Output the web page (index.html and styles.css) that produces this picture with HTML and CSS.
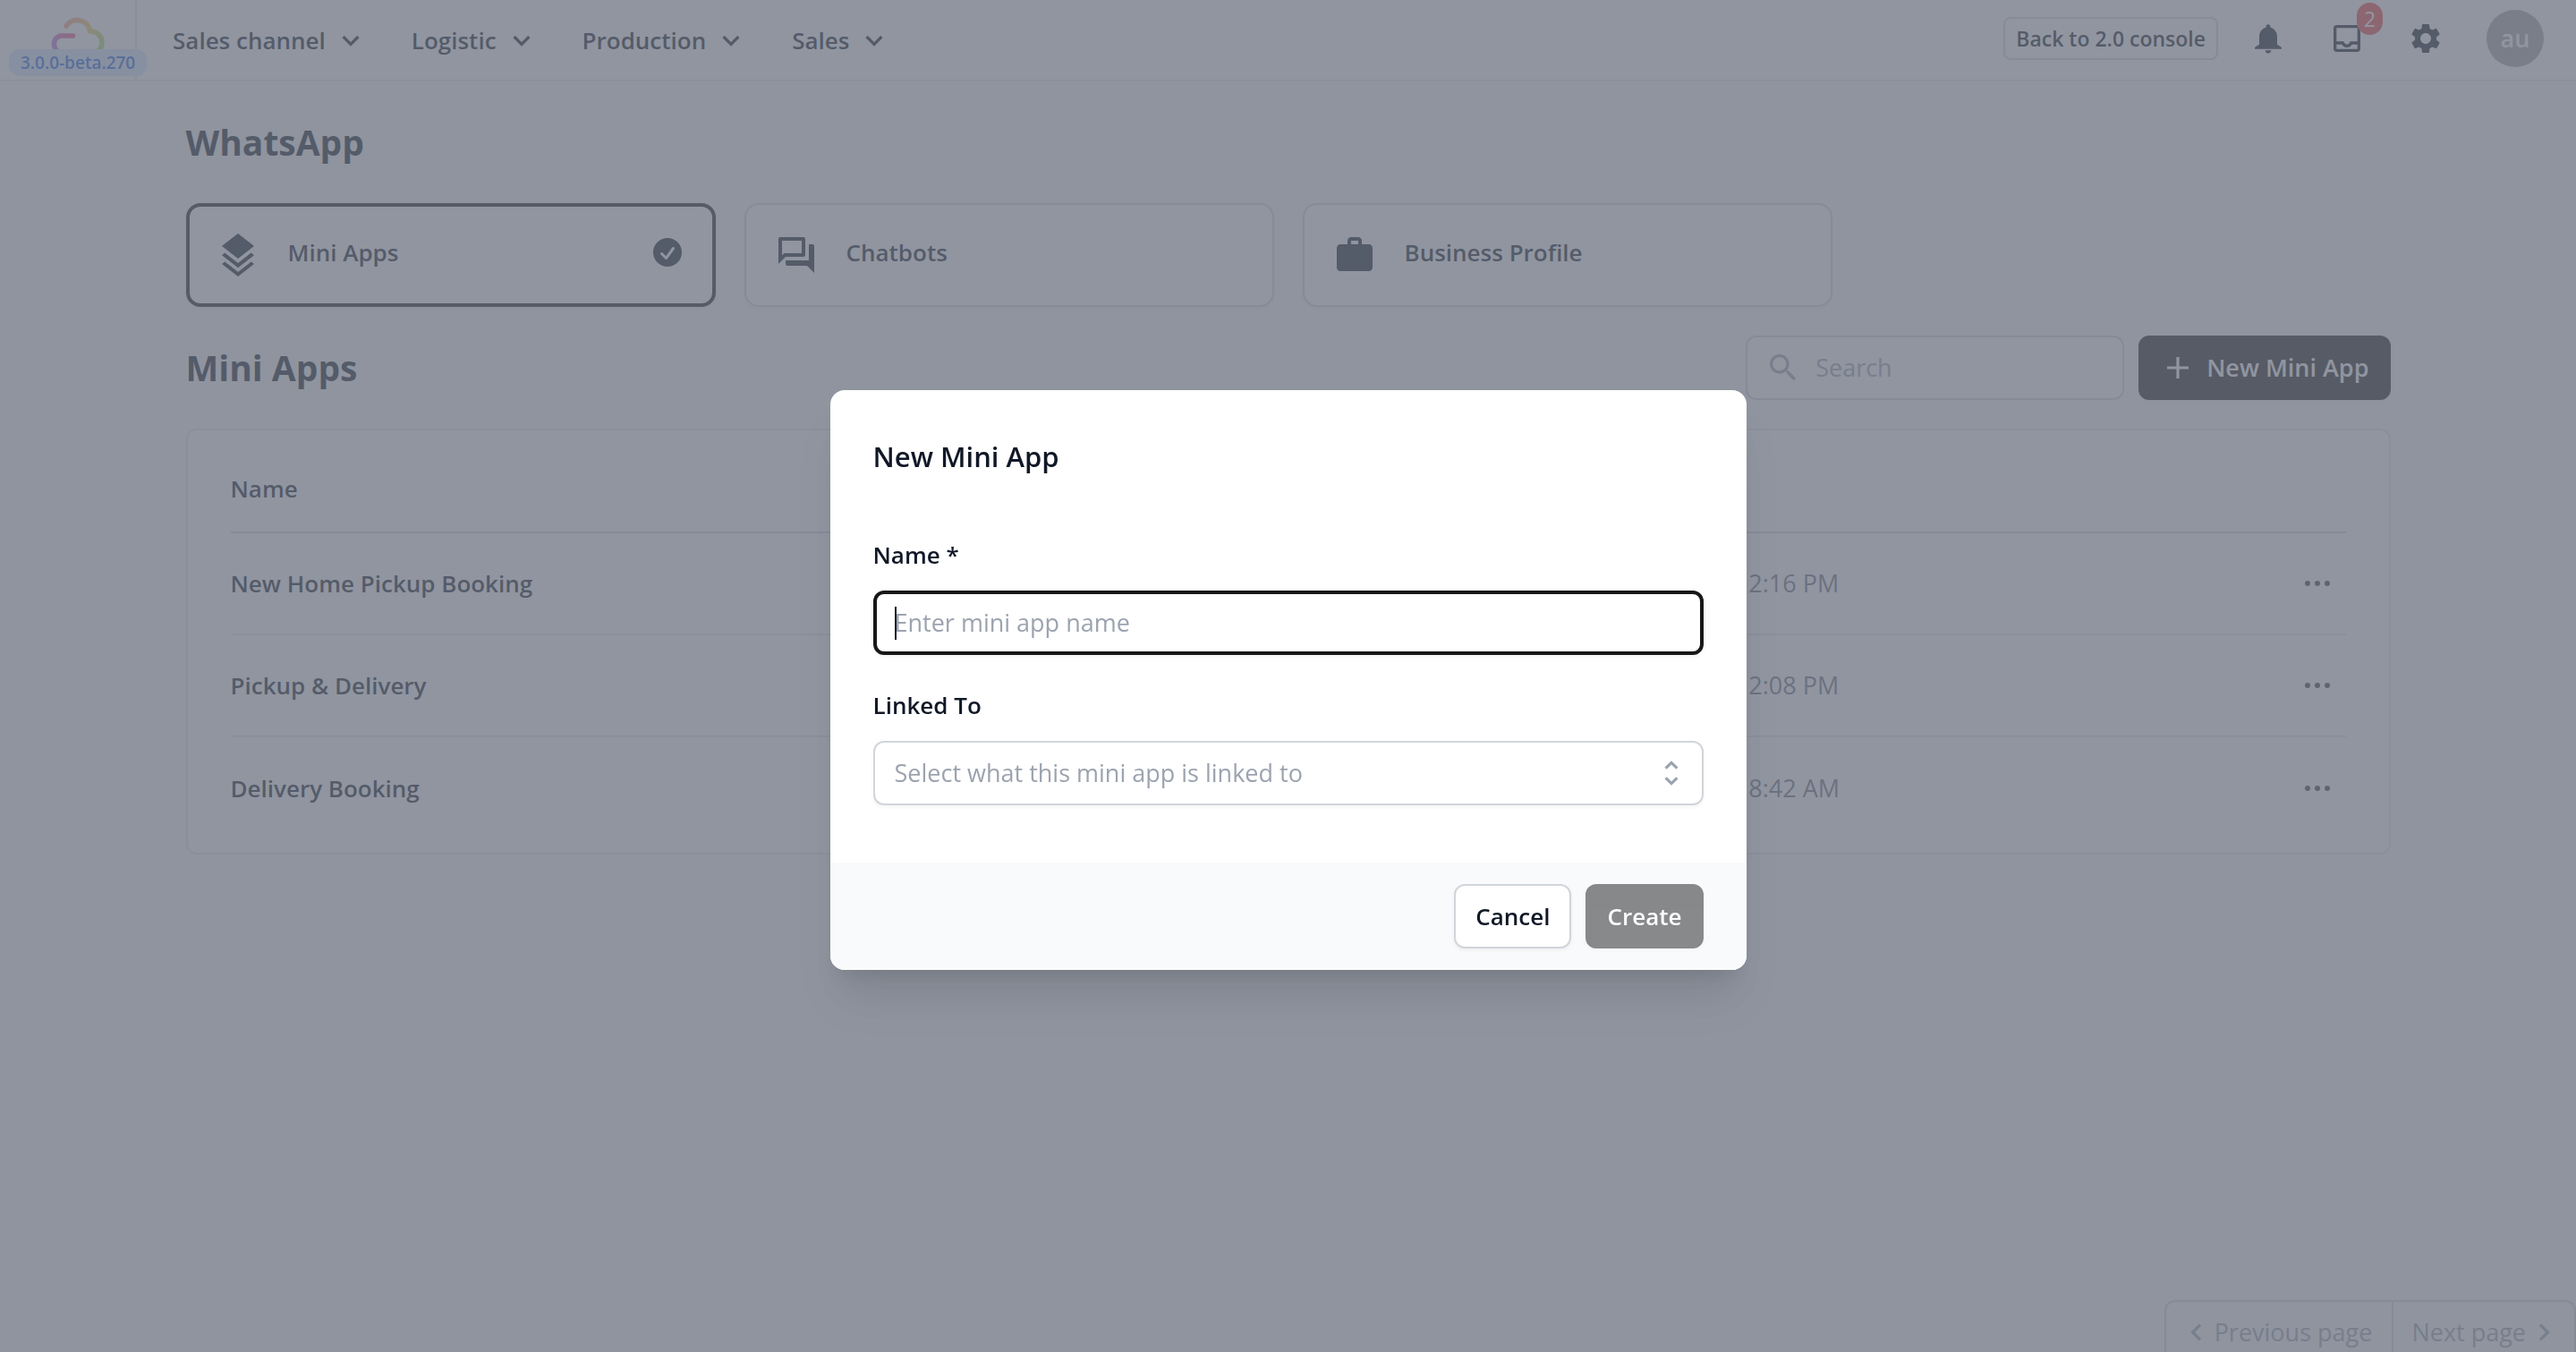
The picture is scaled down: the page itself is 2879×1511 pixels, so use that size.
FILE: index.html
```html
<!doctype html>
<html lang="en">
<head>
    <meta charset="UTF-8">
    <meta name="viewport" content="width=device-width, initial-scale=1.0">
    <title>WhatsApp - Mini Apps</title>

    <link rel="stylesheet" href="styles.css">
</head>
<body>
    <header class="topbar">
        <a class="brand" href="#" aria-label="Home">
            <svg class="brand-logo" viewBox="0 0 62 44" stroke-width="5.500" stroke-linecap="round" stroke-linejoin="round">
                <defs>
                    <linearGradient id="cloudTop" x1="18" y1="0" x2="58" y2="38" gradientUnits="userSpaceOnUse">
                        <stop offset="0" stop-color="#ffa08a"/>
                        <stop offset="0.5" stop-color="#f0cc60"/>
                        <stop offset="1" stop-color="#98e070"/>
                    </linearGradient>
                    <linearGradient id="cloudLeft" x1="28" y1="20" x2="2" y2="38" gradientUnits="userSpaceOnUse">
                        <stop offset="0" stop-color="#ff5080"/>
                        <stop offset="1" stop-color="#b080f0"/>
                    </linearGradient>
                </defs>
                <path d="M18 10C21 5.500 25 3.500 30 3.500c8 0 14 5.500 14.500 12.500 8-.5 13.500 5.500 13.500 12.500 0 6-4 11-11 11.500" stroke="url(#cloudTop)"/>
                <path d="M25.500 21H13C8 21 4.500 25 4.500 30c0 6 4 10 9.500 10" stroke="url(#cloudLeft)"/>
            </svg>
            <span class="version">3.0.0-beta.270</span>
        </a>

        <nav class="menu">
            <button type="button" class="menu-item">Sales channel
                <svg class="icon" viewBox="0 0 20 20"><path d="M5.800 8l4.200 4.200L14.200 8"/></svg>
            </button>
            <button type="button" class="menu-item">Logistic
                <svg class="icon" viewBox="0 0 20 20"><path d="M5.800 8l4.200 4.200L14.200 8"/></svg>
            </button>
            <button type="button" class="menu-item">Production
                <svg class="icon" viewBox="0 0 20 20"><path d="M5.800 8l4.200 4.200L14.200 8"/></svg>
            </button>
            <button type="button" class="menu-item">Sales
                <svg class="icon" viewBox="0 0 20 20"><path d="M5.800 8l4.200 4.200L14.200 8"/></svg>
            </button>
        </nav>

        <div class="tools">
            <a class="console-link" href="#">Back to 2.0 console</a>
            <button type="button" class="tool" aria-label="Notifications">
                <svg viewBox="0 0 24 24"><path d="M12 22c1.100 0 2-.9 2-2h-4c0 1.100.9 2 2 2zm6-6v-5c0-3.070-1.630-5.640-4.500-6.320V4c0-.83-.67-1.500-1.500-1.500s-1.500.67-1.500 1.500v.68C7.640 5.360 6 7.920 6 11v5l-3 2v1h18v-1l-3-2z"/></svg>
            </button>
            <button type="button" class="tool" aria-label="Inbox">
                <svg viewBox="0 0 24 24"><path d="M19 3H5c-1.100 0-2 .9-2 2v14c0 1.100.9 2 2 2h14c1.100 0 2-.9 2-2V5c0-1.100-.9-2-2-2zm0 16H5v-3h3.560c.69 1.190 1.970 2 3.450 2s2.750-.81 3.450-2H19v3zm0-5h-4.990c0 1.100-.9 2-2 2s-2-.9-2-2H5V5h14v9z"/></svg>
                <span class="badge">2</span>
            </button>
            <button type="button" class="tool" aria-label="Settings">
                <svg viewBox="0 0 24 24"><path d="M19.140 12.940c.04-.3.060-.61.060-.94 0-.32-.02-.64-.07-.94l2.030-1.580c.18-.14.230-.41.120-.61l-1.920-3.320c-.12-.22-.37-.29-.59-.22l-2.390.96c-.5-.38-1.030-.7-1.620-.94l-.36-2.540c-.04-.24-.24-.41-.48-.41h-3.840c-.24 0-.43.170-.47.410l-.36 2.540c-.59.240-1.130.570-1.620.940l-2.390-.96c-.22-.08-.47 0-.59.220L2.740 8.870c-.12.210-.08.470.120.610l2.030 1.580c-.05.300-.09.630-.09.940s.02.640.070.940l-2.030 1.580c-.18.140-.23.410-.12.610l1.920 3.320c.12.220.37.290.59.220l2.390-.96c.5.380 1.030.7 1.620.940l.36 2.540c.05.240.24.410.48.410h3.840c.24 0 .44-.17.470-.41l.36-2.540c.59-.24 1.130-.56 1.620-.94l2.390.96c.22.080.47 0 .59-.22l1.920-3.320c.12-.22.070-.47-.12-.61l-2.010-1.580zM12 15.600c-1.980 0-3.600-1.620-3.600-3.600s1.620-3.600 3.600-3.600 3.600 1.620 3.600 3.600-1.620 3.600-3.600 3.600z"/></svg>
            </button>
            <button type="button" class="avatar">au</button>
        </div>
    </header>

    <main class="content">
        <h1>WhatsApp</h1>

        <div class="tabs">
            <button type="button" class="tab tab-active">
                <svg class="tab-icon" viewBox="0 0 24 24"><path d="M12 0l9 7-9 7-9-7z"/><path d="M4.630 10.810L12 16.540l7.370-5.730L21 12.080l-9 7-9-7z"/><path d="M4.630 15.730L12 21.460l7.370-5.730L21 17l-9 7-9-7z"/></svg>
                <span>Mini Apps</span>
                <svg class="tab-check" viewBox="0 0 20 20"><path fill-rule="evenodd" d="M10 18a8 8 0 100-16 8 8 0 000 16zm3.860-9.810a.75.75 0 00-1.220-.88l-3.480 4.800-1.880-1.880a.75.75 0 10-1.060 1.060l2.500 2.500a.75.75 0 001.140-.09l4-5.510z"/></svg>
            </button>
            <button type="button" class="tab">
                <svg class="tab-icon" viewBox="0 0 24 24"><path d="M15 4v7H5.170L4 12.170V4h11m1-2H3c-.55 0-1 .45-1 1v14l4-4h10c.55 0 1-.45 1-1V3c0-.55-.45-1-1-1zm5 4h-2v9H6v2c0 .55.450 1 1 1h11l4 4V7c0-.55-.45-1-1-1z"/></svg>
                <span>Chatbots</span>
            </button>
            <button type="button" class="tab">
                <svg class="tab-icon" viewBox="0 0 24 24"><path d="M20 6h-4V4c0-1.100-.9-2-2-2h-4c-1.100 0-2 .9-2 2v2H4c-1.100 0-2 .9-2 2v11c0 1.100.9 2 2 2h16c1.100 0 2-.9 2-2V8c0-1.100-.9-2-2-2zm-6 0h-4V4h4v2z"/></svg>
                <span>Business Profile</span>
            </button>
        </div>

        <div class="section-head">
            <h2>Mini Apps</h2>
            <div class="search">
                <svg viewBox="0 0 24 24"><path d="M15.500 14h-.79l-.28-.27C15.410 12.590 16 11.110 16 9.500 16 5.910 13.090 3 9.500 3S3 5.910 3 9.500 5.910 16 9.500 16c1.610 0 3.090-.59 4.230-1.570l.27.280v.79l5 4.990L20.490 19l-4.990-5zm-6 0C7.010 14 5 11.990 5 9.500S7.010 5 9.500 5 14 7.010 14 9.500 11.990 14 9.500 14z"/></svg>
                <input type="search" placeholder="Search" aria-label="Search">
            </div>
            <button type="button" class="btn btn-primary btn-new">
                <svg class="icon" viewBox="0 0 20 20"><path d="M10 4v12M4 10h12"/></svg>
                New Mini App
            </button>
        </div>

        <div class="table-card">
            <table>
                <thead>
                    <tr>
                        <th class="col-name">Name</th>
                        <th></th>
                        <th></th>
                    </tr>
                </thead>
                <tbody>
                    <tr>
                        <td class="col-name">New Home Pickup Booking</td>
                        <td class="col-date">2:16 PM</td>
                        <td class="col-actions"><button type="button" aria-label="More"><svg viewBox="0 0 20 20"><path d="M3 10a1.500 1.500 0 113 0 1.500 1.500 0 01-3 0zM8.500 10a1.500 1.500 0 113 0 1.500 1.500 0 01-3 0zM14 10a1.500 1.500 0 113 0 1.500 1.500 0 01-3 0z"/></svg></button></td>
                    </tr>
                    <tr>
                        <td class="col-name">Pickup &amp; Delivery</td>
                        <td class="col-date">2:08 PM</td>
                        <td class="col-actions"><button type="button" aria-label="More"><svg viewBox="0 0 20 20"><path d="M3 10a1.500 1.500 0 113 0 1.500 1.500 0 01-3 0zM8.500 10a1.500 1.500 0 113 0 1.500 1.500 0 01-3 0zM14 10a1.500 1.500 0 113 0 1.500 1.500 0 01-3 0z"/></svg></button></td>
                    </tr>
                    <tr>
                        <td class="col-name">Delivery Booking</td>
                        <td class="col-date">8:42 AM</td>
                        <td class="col-actions"><button type="button" aria-label="More"><svg viewBox="0 0 20 20"><path d="M3 10a1.500 1.500 0 113 0 1.500 1.500 0 01-3 0zM8.500 10a1.500 1.500 0 113 0 1.500 1.500 0 01-3 0zM14 10a1.500 1.500 0 113 0 1.500 1.500 0 01-3 0z"/></svg></button></td>
                    </tr>
                </tbody>
            </table>
        </div>
    </main>

    <nav class="pagination">
        <button type="button" disabled>
            <svg class="icon" viewBox="0 0 20 20"><path d="M12 5.800L7.800 10l4.200 4.200"/></svg>
            Previous page
        </button>
        <button type="button" disabled>
            Next page
            <svg class="icon" viewBox="0 0 20 20"><path d="M8 5.800l4.200 4.200L8 14.200"/></svg>
        </button>
    </nav>

    <div class="overlay">
        <form class="modal" role="dialog" aria-labelledby="modalTitle">
            <div class="modal-body">
                <h3 id="modalTitle">New Mini App</h3>

                <label for="name">Name *</label>
                <input type="text" id="name" placeholder="Enter mini app name" autofocus>

                <label for="linked">Linked To</label>
                <div class="select">
                    <select id="linked">
                        <option value="">Select what this mini app is linked to</option>
                    </select>
                    <svg class="icon" viewBox="0 0 20 20"><path d="M6.800 7.300L10 4.200l3.200 3.100M6.800 12.700l3.200 3.100 3.200-3.100"/></svg>
                </div>
            </div>
            <div class="modal-footer">
                <button type="button" class="btn">Cancel</button>
                <button type="submit" class="btn btn-primary" disabled>Create</button>
            </div>
        </form>
    </div>
</body>
</html>
```
FILE: styles.css
```css
* {
    box-sizing: border-box;
}

body {
    margin: 0;
    overflow: hidden;
    height: 100vh;
    background-color: #fafafa;
    color: #111827;
    font-family: 'Segoe UI', 'Open Sans', sans-serif;
    font-size: 27px;
    line-height: 40px;
}

button, input, select {
    font: inherit;
    color: inherit;
}

button {
    border: 0;
    padding: 0;
    background: none;
    cursor: pointer;
}

a {
    color: inherit;
    text-decoration: none;
}

h1, h2, h3 {
    margin: 0;
}

svg {
    flex: none;
    fill: currentColor;
}

.icon {
    width: 40px;
    height: 40px;
    fill: none;
    stroke: currentColor;
    stroke-width: 1.6;
}

/* top bar */
.topbar {
    display: flex;
    align-items: center;
    height: 91px;
    background-color: #fff;
    border-bottom: 2px solid #e5e7eb;
}

.brand {
    position: relative;
    width: 153px;
    height: 89px;
    padding: 19px 0 0 56px;
    border-right: 2px solid #e5e7eb;
}

.brand-logo {
    display: block;
    width: 62px;
    height: 44px;
    fill: none;
}

.version {
    position: absolute;
    top: 55px;
    left: 10px;
    padding: 0 13px;
    border-radius: 12px;
    background-color: #dbeafe;
    color: #2563eb;
    font-size: 19px;
    font-weight: 600;
    line-height: 30px;
    white-space: nowrap;
}

.menu {
    display: flex;
    gap: 48px;
    margin-left: 40px;
}

.menu-item {
    display: flex;
    align-items: center;
    gap: 8px;
    font-size: 26px;
    font-weight: 600;
}

.tools {
    display: flex;
    align-items: center;
    margin-left: auto;
    padding: 0 36px 4px 0;
}

.console-link {
    margin-right: 36px;
    padding: 0 12px;
    border: 2px solid #d1d5db;
    border-radius: 8px;
    font-size: 23px;
    font-weight: 600;
    line-height: 44px;
}

.tool {
    position: relative;
    width: 40px;
    height: 40px;
    margin-right: 48px;
}

.tool svg {
    display: block;
    width: 40px;
    height: 40px;
}

.badge {
    position: absolute;
    top: -20px;
    right: -20px;
    width: 29px;
    border-radius: 16px;
    background-color: #ef4444;
    color: #fff;
    font-size: 23px;
    line-height: 36px;
}

.avatar {
    width: 64px;
    height: 64px;
    border-radius: 50%;
    background-color: #a3a3a3;
    color: #fff;
    font-weight: 600;
}

/* page */
.content {
    max-width: 2560px;
    min-height: calc(100vh - 149px);
    margin: 0 auto;
    padding: 44px 48px;
}

h1, h2 {
    font-size: 39px;
    font-weight: 700;
    line-height: 48px;
}

.tabs {
    display: grid;
    grid-template-columns: repeat(4, 1fr);
    gap: 32px;
    margin-top: 44px;
}

.tab {
    display: flex;
    align-items: center;
    gap: 32px;
    height: 116px;
    padding: 0 32px;
    border: 2px solid #d1d5db;
    border-radius: 16px;
    background-color: #fff;
    box-shadow: 0 2px 4px rgba(0, 0, 0, 0.05);
    font-size: 26px;
    font-weight: 600;
}

.tab-active {
    padding: 0 30px;
    border: 4px solid #18181b;
}

.tab-icon {
    width: 48px;
    height: 48px;
}

.tab span,
.tab-check {
    margin-bottom: 6px;
}

.tab-check {
    width: 40px;
    height: 40px;
    margin-left: auto;
}

.section-head {
    display: flex;
    align-items: center;
    gap: 16px;
    margin-top: 32px;
}

.section-head h2 {
    margin-right: auto;
}

.search {
    display: flex;
    align-items: center;
    gap: 16px;
    width: 423px;
    height: 72px;
    padding: 0 20px;
    border: 2px solid #d1d5db;
    border-radius: 12px;
    background-color: #fff;
    color: #9ca3af;
}

.search svg {
    width: 40px;
    height: 40px;
}

.search input {
    flex: 1;
    min-width: 0;
    padding: 0;
    border: 0;
    outline: 0;
    background: none;
}

::placeholder {
    color: #9ca3af;
    opacity: 1;
}

.btn {
    height: 72px;
    padding: 0 22px;
    border: 2px solid #d1d5db;
    border-radius: 12px;
    background-color: #fff;
    box-shadow: 0 2px 4px rgba(0, 0, 0, 0.05);
    font-size: 26px;
    font-weight: 600;
}

.btn-primary {
    border-color: #18181b;
    background-color: #18181b;
    color: #fff;
}

.btn-primary:disabled {
    opacity: 0.5;
}

.btn-new {
    display: flex;
    align-items: center;
    gap: 12px;
    font-size: 27px;
}

.table-card {
    margin-top: 32px;
    padding: 16px 48px;
    border: 2px solid #e5e7eb;
    border-radius: 12px;
    background-color: #fff;
}

table {
    width: 100%;
    border-collapse: collapse;
}

th, td {
    height: 114px;
    padding: 0;
    border-bottom: 2px solid #e5e7eb;
    text-align: left;
}

th {
    height: 98px;
    border-color: #d1d5db;
}

tr:last-child td {
    border-bottom: 0;
}

.col-name {
    width: 70%;
    font-size: 26px;
    font-weight: 600;
}

.col-date {
    padding-left: 42px;
    color: #6b7280;
}

.col-actions {
    padding-right: 12px;
    color: #3f3f46;
}

.col-actions button {
    display: block;
    margin-left: auto;
}

.col-actions svg {
    display: block;
    width: 40px;
    height: 40px;
}

.pagination {
    display: flex;
    justify-content: flex-end;
    color: #9ca3af;
}

.pagination button {
    display: flex;
    align-items: center;
    height: 72px;
    padding: 0 22px 0 14px;
    border: 2px solid #d1d5db;
    border-radius: 12px 0 0 12px;
    background-color: #fafafa;
}

.pagination button + button {
    padding: 0 14px 0 20px;
    border-left: 0;
    border-radius: 0 12px 12px 0;
}

/* modal */
.overlay {
    position: fixed;
    inset: 0;
    display: flex;
    align-items: center;
    justify-content: center;
    padding-top: 8px;
    background-color: rgba(107, 114, 128, 0.75);
}

.modal {
    width: 1024px;
    max-width: 100%;
    overflow: hidden;
    border-radius: 16px;
    background-color: #fff;
    box-shadow: 0 40px 50px -10px rgba(0, 0, 0, 0.1), 0 16px 20px -12px rgba(0, 0, 0, 0.1);
}

.modal-body {
    display: flex;
    flex-direction: column;
    padding: 48px 48px 64px;
}

.modal h3 {
    margin-bottom: 28px;
    font-size: 31px;
    font-weight: 600;
    line-height: 52px;
}

.modal label {
    margin-top: 36px;
    margin-bottom: 20px;
    font-size: 26px;
    font-weight: 600;
}

.modal input,
.modal select {
    width: 100%;
    height: 72px;
    padding: 0 22px;
    border: 2px solid #d1d5db;
    border-radius: 12px;
    outline: 0;
    background-color: #fff;
    box-shadow: 0 2px 4px rgba(0, 0, 0, 0.05);
}

.modal input:focus {
    padding: 0 20px;
    border: 4px solid #18181b;
}

/* steady caret while the field is empty */
.modal input:focus:placeholder-shown {
    background: #fff linear-gradient(#111827, #111827) 20px 14px / 2px 37px no-repeat;
    caret-color: transparent;
}

.modal select {
    appearance: none;
    color: #9ca3af;
}

.select {
    position: relative;
}

.select .icon {
    position: absolute;
    top: 16px;
    right: 16px;
    color: #9ca3af;
    pointer-events: none;
}

.modal-footer {
    display: flex;
    justify-content: flex-end;
    gap: 16px;
    padding: 24px 48px;
    background-color: #f9fafb;
}
```
